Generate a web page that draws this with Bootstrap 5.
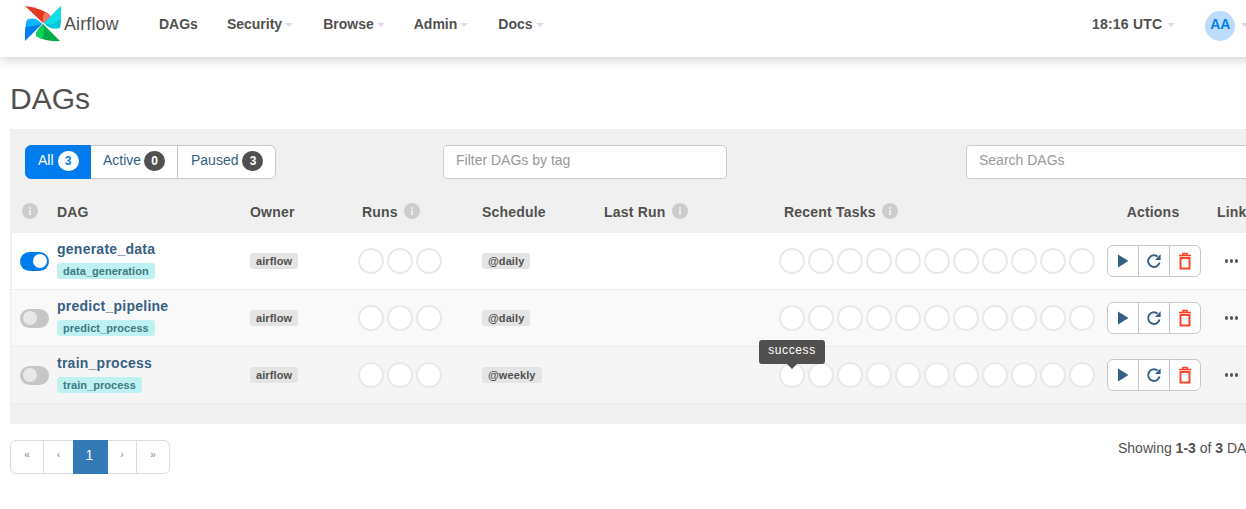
<!DOCTYPE html>
<html lang="en">
<head>
  <meta charset="UTF-8">
  <title>DAGs - Airflow</title>
  <link href="https://cdn.jsdelivr.net/npm/bootstrap@5.3.2/dist/css/bootstrap.min.css" rel="stylesheet">
  <style>
    html, body { overflow: hidden; height: 100%; }
    body { width: 1260px; font-family: "Liberation Sans", Arial, sans-serif; font-size: 14px; color: #51504f; background: #fff; }

    /* navbar */
    .af-nav { height: 57px; padding: 0 0 8px 25px; box-shadow: 0 2px 12px rgba(0,0,0,.2); background: #fff; flex-wrap: nowrap; }
    .af-brand { display: flex; align-items: center; gap: 3px; width: 134px; font-size: 18px; color: #51504f; text-decoration: none; letter-spacing: .1px; }
    .af-brand svg { margin-top: -2px; }
    .af-links { display: flex; flex-direction: row; list-style: none; margin: 0; padding: 0; gap: 30px; }
    .af-links li:first-child { margin-right: -1px; }
    .af-links li:nth-child(3) { margin-right: -1px; }
    .af-links a, .af-clock { font-weight: 700; color: #51504f; text-decoration: none; white-space: nowrap; }
    .af-caret::after { content: ""; display: inline-block; margin-left: 3px; vertical-align: 2px; border-top: 4px solid #e3d9e5; border-left: 4px solid transparent; border-right: 4px solid transparent; }
    .af-right { margin-left: auto; width: 160px; display: flex; align-items: center; flex: none; margin-right: 8px; }
    .af-clock { margin-right: 30px; letter-spacing: .2px; }
    .af-clock.af-caret::after { margin-left: 5px; }
    .af-avatar { width: 30px; height: 30px; padding-bottom: 3px; border-radius: 50%; background: #bcdcfb; color: #017cee; font-weight: 700; display: flex; align-items: center; justify-content: center; flex: none; margin-top: 3px; }
    .af-user { display: flex; align-items: center; }
    .af-user.af-caret::after { margin-left: 6px; }

    /* main */
    .af-main { padding: 0 0 0 10px; }
    .af-title { font-size: 30px; line-height: 33px; margin: 25px 0 14px; font-weight: 400; color: #51504f; }
    .af-panel { background: #f0f0f0; padding: 16px 0 20px 2px; }
    .af-filters { display: flex; align-items: center; padding-left: 13px; height: 34px; margin-bottom: 13px; }
    .af-status { flex: none; }
    .af-status .btn { flex: none; height: 34px; font-size: 14px; padding: 4px 0 8px 12px; color: #365f84; background: #fff; border-color: #c8c8c8; display: flex; align-items: center; gap: 3px; line-height: 20px; }
    .af-status .btn:nth-child(1) { width: 66px; gap: 4px; }
    .af-status .btn:nth-child(2) { width: 88px; }
    .af-status .btn:nth-child(3) { width: 99px; padding-left: 13px; gap: 4px; }
    .af-status .btn.active { background: #017cee; border-color: #017cee; color: #fff; }
    .af-count { width: 21px; height: 20px; line-height: 20px; border-radius: 10px; background: #51504f; color: #fff; font-size: 12px; font-weight: 700; text-align: center; margin-top: 2px; }
    .active .af-count { background: #fff; color: #017cee; }
    .af-input { flex: none; height: 34px; border: 1px solid #ccc; border-radius: 4px; background: #fff; font-size: 14px; padding: 4px 12px 8px; color: #999; line-height: 20px; }
    .af-tag-filter { width: 284px; margin-left: 167px; }
    .af-search { width: 300px; margin-left: 239px; }

    /* table */
    .af-table { table-layout: fixed; width: 1234px; margin: 0; border-collapse: separate; border-spacing: 0; }
    .af-table col:nth-child(1) { width: 37px; }
    .af-table col:nth-child(2) { width: 193px; }
    .af-table col:nth-child(3) { width: 112px; }
    .af-table col:nth-child(4) { width: 120px; }
    .af-table col:nth-child(5) { width: 122px; }
    .af-table col:nth-child(6) { width: 180px; }
    .af-table col:nth-child(7) { width: 323px; }
    .af-table col:nth-child(8) { width: 110px; }
    .af-table col:nth-child(9) { width: 37px; }
    .af-table th { background: #f0f0f0; height: 41px; padding: 0 8px; font-weight: 700; color: #51504f; border: 0; vertical-align: middle; white-space: nowrap; letter-spacing: .2px; }
    .af-table td { height: 57px; padding: 0 8px; border-top: 0; border-bottom: 1px solid #ebebeb; vertical-align: middle; color: #51504f; background: #fff; box-shadow: none; }
    .af-table tr.af-even td { background: #f9f9f9; }
    .af-table tr.af-hover td { background: #f5f5f5; }
    .af-table .af-action-head { text-align: center; padding-left: 8px; padding-right: 10px; }

    .af-info { display: inline-block; vertical-align: -2px; margin-left: 2px; }
    .af-toggle { display: block; width: 29px; height: 19px; border-radius: 10px; background: #c8c6c4; position: relative; }
    .af-toggle::after { content: ""; position: absolute; top: 2.5px; left: 2.5px; width: 14px; height: 14px; border-radius: 50%; background: #e8e8e8; }
    .af-toggle.on { background: #017cee; }
    .af-toggle.on::after { left: 12.5px; background: #fff; }

    .af-dag { display: block; font-weight: 700; font-size: 14px; line-height: 16px; color: #365f84; text-decoration: none; letter-spacing: .25px; margin-top: -2px; }
    .af-chip { height: 16px; line-height: 16px; border-radius: 3px; font-size: 11px; font-weight: 700; padding: 0 6px; }
    .af-tag { display: inline-block; vertical-align: top; letter-spacing: .05px; background: #bff1f2; color: #3d7a80; margin-top: 6px; }
    .af-label { display: block; width: fit-content; letter-spacing: .1px; background: #e4e4e4; color: #51504f; }

    .af-rings { display: flex; gap: 3px; margin-left: -4px; }
    .af-rings.af-recent { margin-left: -5px; }
    .af-ring { width: 26px; height: 26px; border: 2px solid #e8e8e8; border-radius: 50%; background: #fff; flex: none; }

    .af-actions .btn { width: 32px; height: 32px; padding: 0; background: #fff; border-color: #c8c8c8; display: flex; align-items: center; justify-content: center; }
    .af-dots { display: flex; gap: 2px; margin-left: 8px; margin-top: -1px; }
    .af-dots i { width: 4px; height: 4px; border-radius: 50%; background: #51504f; }

    /* tooltip */
    .af-tip-anchor { position: relative; }
    .af-tip { position: absolute; left: -22px; top: -24px; width: 66px; height: 24px; line-height: 20px; background: #51504f; color: #fff; font-size: 12px; text-align: center; border-radius: 3px; letter-spacing: .6px; }
    .af-tip::after { content: ""; position: absolute; left: 28px; bottom: -5px; border-top: 5px solid #51504f; border-left: 5px solid transparent; border-right: 5px solid transparent; }

    /* footer */
    .af-foot { display: flex; align-items: flex-start; margin-top: 16px; }
    .af-pages { margin: 0; }
    .af-pages .page-link { height: 34px; font-size: 10px; line-height: 20px; padding: 4px 0 8px; text-align: center; color: #888; border-color: #ddd; background: #fff; }
    .af-pages .page-item:nth-child(1) .page-link { width: 34px; }
    .af-pages .page-item:nth-child(2) .page-link { width: 31px; }
    .af-pages .page-item:nth-child(3) .page-link { width: 35px; padding-right: 2px; font-size: 14px; background: #337ab7; border-color: #337ab7; color: #fff; }
    .af-pages .page-item:nth-child(4) .page-link { width: 30px; }
    .af-pages .page-item:nth-child(5) .page-link { width: 34px; }
    .af-showing { margin-left: 948px; margin-top: 0; line-height: 17px; white-space: nowrap; }
  </style>
</head>
<body>

<nav class="navbar af-nav">
  <a class="af-brand" href="#">
    <svg width="36" height="36" viewBox="0 0 36 36">
      <path d="M0 0 L18 17 Q26 14 25 9 Q16 2 0 0 Z" fill="#e43921"/>
      <path d="M18 17 Q26 14 25 9 L20 6 Q17 10 18 17 Z" fill="#f4725b"/>
      <path d="M36 0 L19 17 Q26 25 35 22 Q37 12 36 0 Z" fill="#00c7d4"/>
      <path d="M36 0 L19 17 Q22 18 27 19 L36 13 Z" fill="#11dce8"/>
      <path d="M35 35 L18 18 Q10 26 11 30 Q20 36 35 35 Z" fill="#00ad46"/>
      <path d="M18 18 Q10 26 11 30 L17 33 Q20 26 18 18 Z" fill="#04d659"/>
      <path d="M0 35 L17 18 Q10 10 2 14 Q-1 24 0 35 Z" fill="#017cee"/>
      <path d="M17 18 Q10 10 2 14 L1 21 Q10 20 17 18 Z" fill="#0cb6ff"/>
    </svg>
    <span>Airflow</span>
  </a>
  <ul class="af-links">
    <li><a href="#">DAGs</a></li>
    <li><a href="#" class="af-caret">Security</a></li>
    <li><a href="#" class="af-caret">Browse</a></li>
    <li><a href="#" class="af-caret">Admin</a></li>
    <li><a href="#" class="af-caret">Docs</a></li>
  </ul>
  <div class="af-right">
    <span class="af-clock af-caret">18:16 UTC</span>
    <span class="af-user af-caret"><span class="af-avatar">AA</span></span>
  </div>
</nav>

<div class="af-main">
  <h2 class="af-title">DAGs</h2>

  <div class="af-panel">
    <div class="af-filters">
      <div class="btn-group af-status">
        <a class="btn active" href="#">All <span class="af-count">3</span></a>
        <a class="btn" href="#">Active <span class="af-count">0</span></a>
        <a class="btn" href="#">Paused <span class="af-count">3</span></a>
      </div>
      <div class="af-input af-tag-filter">Filter DAGs by tag</div>
      <div class="af-input af-search">Search DAGs</div>
    </div>

    <table class="table af-table">
      <colgroup>
        <col><col><col><col><col><col><col><col><col>
      </colgroup>
      <thead>
        <tr id="head"></tr>
      </thead>
      <tbody id="rows"></tbody>
    </table>
  </div>

  <div class="af-foot">
    <ul class="pagination af-pages">
      <li class="page-item"><a class="page-link" href="#">«</a></li>
      <li class="page-item"><a class="page-link" href="#">‹</a></li>
      <li class="page-item active"><a class="page-link" href="#">1</a></li>
      <li class="page-item"><a class="page-link" href="#">›</a></li>
      <li class="page-item"><a class="page-link" href="#">»</a></li>
    </ul>
    <p class="af-showing">Showing <strong>1-3</strong> of <strong>3</strong> DAGs</p>
  </div>
</div>

<script>
  const info = '<svg class="af-info" width="16" height="16" viewBox="0 0 16 16"><circle cx="8" cy="8" r="8" fill="#ccc"/><rect x="7" y="7" width="2" height="5" fill="#eee"/><rect x="7" y="4" width="2" height="2" fill="#eee"/></svg>';
  const heads = [info, 'DAG', 'Owner', 'Runs ' + info, 'Schedule', 'Last Run ' + info, 'Recent Tasks ' + info, 'Actions', 'Links'];

  const dags = [
    { name: 'generate_data', tag: 'data_generation', schedule: '@daily', on: true, cls: '' },
    { name: 'predict_pipeline', tag: 'predict_process', schedule: '@daily', on: false, cls: 'af-even' },
    { name: 'train_process', tag: 'train_process', schedule: '@weekly', on: false, cls: 'af-hover' }
  ];

  const rings = (n, tip, cls) => {
    let out = '';
    for (let i = 0; i < n; i++) {
      out += i === 0 && tip
        ? '<div class="af-ring af-tip-anchor"><div class="af-tip">success</div></div>'
        : '<div class="af-ring"></div>';
    }
    return `<div class="af-rings ${cls || ''}">${out}</div>`;
  };

  const actions = '<div class="btn-group af-actions">' +
    '<a class="btn" href="#"><svg width="14" height="14" viewBox="0 0 14 14"><path d="M2 .5 L12.5 7 L2 13.5 Z" fill="#365f84"/></svg></a>' +
    '<a class="btn" href="#"><svg width="16" height="16" viewBox="0 0 16 16"><path d="M13.6 9.5 A5.8 5.8 0 1 1 11.6 3.6" fill="none" stroke="#365f84" stroke-width="1.9"/><path d="M14.6 1.2 V7 H9 Z" fill="#365f84"/></svg></a>' +
    '<a class="btn" href="#"><svg width="14" height="18" viewBox="0 0 14 18"><path d="M1 3.5 H13 M5 3 V1.5 H9 V3" fill="none" stroke="#ff3d1f" stroke-width="1.6"/><rect x="2.5" y="6" width="9" height="10.5" fill="none" stroke="#ff3d1f" stroke-width="1.9"/></svg></a>' +
    '</div>';

  document.getElementById('head').innerHTML = heads.map((h, i) => {
    const cls = i === 7 ? ' class="af-action-head"' : '';
    return `<th${cls}>${h}</th>`;
  }).join('');

  document.getElementById('rows').innerHTML = dags.map((d, i) => `
    <tr class="${d.cls}">
      <td><span class="af-toggle ${d.on ? 'on' : ''}"></span></td>
      <td><a class="af-dag" href="#">${d.name}</a><span class="af-chip af-tag">${d.tag}</span></td>
      <td><span class="af-chip af-label">airflow</span></td>
      <td>${rings(3)}</td>
      <td><span class="af-chip af-label">${d.schedule}</span></td>
      <td></td>
      <td>${rings(11, i === 2, 'af-recent')}</td>
      <td>${actions}</td>
      <td><div class="af-dots"><i></i><i></i><i></i></div></td>
    </tr>`).join('');
</script>

<script src="https://cdn.jsdelivr.net/npm/bootstrap@5.3.2/dist/js/bootstrap.bundle.min.js"></script>
</body>
</html>
